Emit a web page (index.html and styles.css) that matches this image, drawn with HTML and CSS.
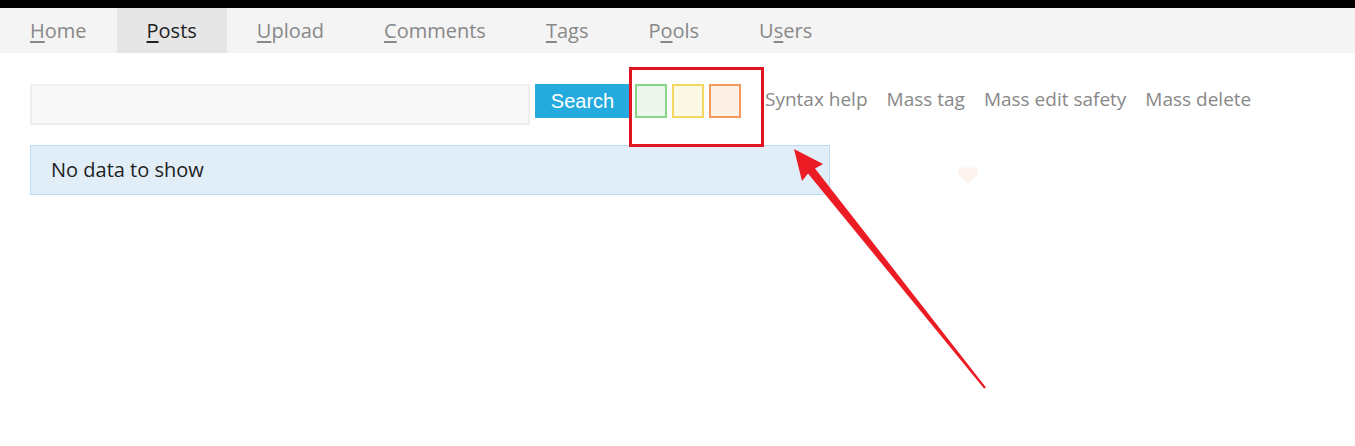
FILE: index.html
```html
<!DOCTYPE html>
<html lang="en">
<head>
    <meta charset="UTF-8">
    <title>Posts</title>
    <link rel="stylesheet" href="styles.css">
</head>
<body>
    <div class="topbar"></div>

    <nav class="main-nav">
        <a href="#"><u>H</u>ome</a>
        <a href="#" class="active"><u>P</u>osts</a>
        <a href="#"><u>U</u>pload</a>
        <a href="#"><u>C</u>omments</a>
        <a href="#"><u>T</u>ags</a>
        <a href="#">P<u>o</u>ols</a>
        <a href="#">U<u>s</u>ers</a>
    </nav>

    <main class="content">
        <form class="search-row">
            <input type="text" class="search-input">
            <button type="submit" class="search-btn">Search</button>
            <div class="safety">
                <span class="safe"></span>
                <span class="sketchy"></span>
                <span class="unsafe"></span>
            </div>
            <div class="post-links">
                <a href="#">Syntax help</a>
                <a href="#">Mass tag</a>
                <a href="#">Mass edit safety</a>
                <a href="#">Mass delete</a>
            </div>
        </form>

        <div class="messages">No data to show</div>

        <svg class="heart" width="22" height="18" viewBox="0 0 22 18">
            <path d="M11 17 C4 11 1 8.5 1 5 C1 2.5 3 1 5.5 1 C8 1 10 2.5 11 4.5 C12 2.5 14 1 16.5 1 C19 1 21 2.5 21 5 C21 8.5 18 11 11 17 Z" fill="#fdf3ec"/>
        </svg>
    </main>

    <!-- annotation -->
    <div class="highlight"></div>
    <svg class="arrow" width="1355" height="446" viewBox="0 0 1355 446">
        <polygon points="794,149 823,164 815,168.5 986,387.5 984,388.5 808,173.5 802,181" fill="#ec1c24"/>
    </svg>
</body>
</html>
```

FILE: styles.css
```css
body {
    margin: 0;
    font-family: 'Open Sans', sans-serif;
    background: #fff;
    color: #222;
}

.topbar {
    height: 8px;
    background: #000;
}

/* Navigation */
.main-nav {
    display: flex;
    height: 45px;
    background: #f4f4f4;
}

.main-nav a {
    display: flex;
    align-items: center;
    padding: 0 30px;
    font-size: 20px;
    color: #888;
    text-decoration: none;
}

.main-nav a u {
    text-decoration-thickness: 2px;
    text-underline-offset: 3px;
}

.main-nav a.active {
    background: #e6e6e6;
    color: #222;
}

/* Content */
.content {
    position: relative;
    padding: 31px 30px 0;
}

.search-row {
    display: flex;
    align-items: flex-start;
    gap: 5px;
}

.search-input {
    box-sizing: border-box;
    width: 500px;
    height: 41px;
    margin: 0;
    background: #f8f8f8;
    border: 2px solid #eee;
}

.search-btn {
    height: 34px;
    width: 95px;
    margin: 0;
    border: none;
    background: #24aadd;
    color: #fff;
    font-family: 'Liberation Sans', Arial, sans-serif;
    font-size: 20px;
}

.safety {
    display: flex;
    gap: 5px;
}

.safety span {
    box-sizing: border-box;
    width: 32px;
    height: 34px;
    border: 2px solid;
}

.safety .safe {
    border-color: #88d488;
    background: #edf7ec;
}

.safety .sketchy {
    border-color: #f3d75f;
    background: #fcf8e6;
}

.safety .unsafe {
    border-color: #f4985c;
    background: #fdf0e7;
}

.post-links {
    display: flex;
    gap: 19px;
    margin-left: 19px;
    line-height: 31px;
}

.post-links a {
    font-size: 19px;
    color: #888;
    text-decoration: none;
}

.messages {
    box-sizing: border-box;
    width: 800px;
    height: 50px;
    margin-top: 20px;
    padding: 0 20px 2px;
    display: flex;
    align-items: center;
    background: #e1eef8;
    border: 1px solid #bcdcf5;
    font-size: 20px;
    color: #222;
}

.heart {
    position: absolute;
    left: 957px;
    top: 113px;
}

/* Annotation overlay */
.highlight {
    position: absolute;
    left: 629px;
    top: 67px;
    width: 129px;
    height: 74px;
    border: 3px solid #e0151f;
}

.arrow {
    position: absolute;
    left: 0;
    top: 0;
    pointer-events: none;
}
```
